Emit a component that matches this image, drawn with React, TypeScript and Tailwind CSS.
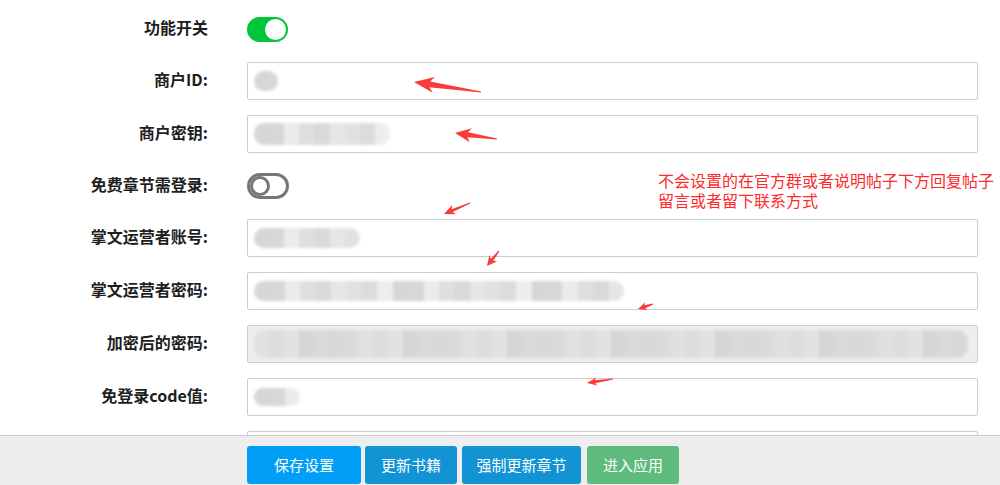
import React from "react";

type Pt = [number, number];

function arrowPoints(tip: Pt, tail: Pt, headLen: number, headW: number, shaftW: number) {
  const dx = tip[0] - tail[0];
  const dy = tip[1] - tail[1];
  const len = Math.hypot(dx, dy);
  const ux = dx / len;
  const uy = dy / len;
  const nx = -uy;
  const ny = ux;
  const at = (d: number, w: number): Pt => [tip[0] - ux * d + nx * w, tip[1] - uy * d + ny * w];
  const pts: Pt[] = [
    tip,
    at(headLen, headW),
    at(headLen * 0.8, shaftW),
    [tail[0] + nx * 0.6, tail[1] + ny * 0.6],
    [tail[0] - nx * 0.6, tail[1] - ny * 0.6],
    at(headLen * 0.8, -shaftW),
    at(headLen, -headW),
  ];
  return pts.map((p) => p.join(",")).join(" ");
}

const ARROWS: { tip: Pt; tail: Pt; h: number; w: number; s: number }[] = [
  { tip: [414, 82], tail: [481, 92], h: 20, w: 8, s: 3 },
  { tip: [455, 133], tail: [497, 139], h: 16, w: 7, s: 2.5 },
  { tip: [444, 214], tail: [470, 203], h: 11, w: 5, s: 1.5 },
  { tip: [487, 266], tail: [499, 251], h: 10, w: 5, s: 1.5 },
  { tip: [638, 309], tail: [653, 304], h: 9, w: 4, s: 1.5 },
  { tip: [587, 383], tail: [613, 379], h: 10, w: 4, s: 1.5 },
];

const GREYS = ["#e6e6e6", "#dcdcdc", "#d6d6d6", "#ebebeb", "#d9d9d9", "#e1e1e1", "#eeeeee", "#d7d7d7", "#dfdfdf"];
const SOFT = ["#dddddd", "#d9d9d9", "#e0e0e0", "#d6d6d6", "#dbdbdb", "#e2e2e2", "#d8d8d8"];

function Blurred({ width, height, cells, soft }: { width: number; height: number; cells: number; soft?: boolean }) {
  const pal = soft ? SOFT : GREYS;
  return (
    <div className="flex overflow-hidden rounded-[10px] blur-[1.5px]" style={{ width, height }}>
      {Array.from({ length: cells }).map((_, i) => (
        <div key={i} className="flex-1" style={{ background: pal[(i * 5 + 2) % pal.length] }} />
      ))}
    </div>
  );
}

function Label({ children }: { children: React.ReactNode }) {
  return (
    <div className="-mt-[4px] w-[208px] shrink-0 text-right text-[16px] font-bold text-[#1e1e1e]">
      {children}
    </div>
  );
}

function InputRow({
  label,
  disabled,
  value,
}: {
  label: string;
  disabled?: boolean;
  value?: { w: number; h: number; cells: number; soft?: boolean };
}) {
  return (
    <div className="flex h-[38px] shrink-0 items-center">
      <Label>{label}</Label>
      <div
        className={`ml-[39px] flex h-[38px] w-[731px] items-center rounded-[2px] border border-[#cccccc] px-[6px] ${
          disabled ? "bg-[#eeeeee]" : "bg-white"
        }`}
      >
        {value && <Blurred width={value.w} height={value.h} cells={value.cells} soft={value.soft} />}
      </div>
    </div>
  );
}

function Toggle({ on }: { on: boolean }) {
  return on ? (
    <div className="flex h-[25px] w-[41px] items-center justify-end rounded-full bg-[#00c63c] pr-[2px]">
      <div className="h-[21px] w-[21px] rounded-full bg-white" />
    </div>
  ) : (
    <div className="flex h-[26px] w-[42px] items-center rounded-full border-[3px] border-[#777777] bg-white">
      <div className="h-[20px] w-[20px] rounded-full border-[3px] border-[#777777] bg-white" />
    </div>
  );
}

function ToggleRow({ label, on }: { label: string; on: boolean }) {
  return (
    <div className="flex h-[36px] shrink-0 items-center">
      <Label>{label}</Label>
      <div className="ml-[39px]">
        <Toggle on={on} />
      </div>
    </div>
  );
}

export default function App() {
  return (
    <div
      className="relative flex h-[485px] w-[1000px] flex-col overflow-hidden bg-white"
      style={{ fontFamily: '"Noto Sans CJK SC", "Noto Sans", sans-serif' }}
    >
      <div className="flex min-h-0 flex-1 flex-col gap-[15px] overflow-hidden pt-[11px]">
        <ToggleRow label="功能开关" on />
        <InputRow label="商户ID:" value={{ w: 24, h: 20, cells: 2 }} />
        <InputRow label="商户密钥:" value={{ w: 136, h: 22, cells: 9 }} />
        <ToggleRow label="免费章节需登录:" on={false} />
        <InputRow label="掌文运营者账号:" value={{ w: 106, h: 20, cells: 7 }} />
        <InputRow label="掌文运营者密码:" value={{ w: 370, h: 20, cells: 24 }} />
        <InputRow label="加密后的密码:" disabled value={{ w: 714, h: 28, cells: 48, soft: true }} />
        <InputRow label="免登录code值:" value={{ w: 46, h: 18, cells: 3 }} />
        <InputRow label="" />
      </div>

      <div className="flex h-[50px] shrink-0 items-end gap-[4px] border-t border-[#cccccc] bg-[#eeeeee] pb-[1px] pl-[247px]">
        <button className="h-[38px] w-[114px] rounded-[3px] bg-[#009ff5] text-[15px] text-white">保存设置</button>
        <button className="h-[38px] w-[92px] rounded-[3px] bg-[#1193d4] text-[15px] text-white">更新书籍</button>
        <button className="ml-[1px] h-[38px] w-[119px] rounded-[3px] bg-[#1193d4] text-[15px] text-white">强制更新章节</button>
        <button className="ml-[2px] h-[38px] w-[92px] rounded-[3px] bg-[#5fba7d] text-[15px] text-white">进入应用</button>
      </div>

      <p className="pointer-events-none absolute left-[658px] top-[170px] text-[16px] leading-[20px] text-[#ff2a2a]">
        不会设置的在官方群或者说明帖子下方回复帖子
        <br />
        留言或者留下联系方式
      </p>

      <svg className="pointer-events-none absolute left-0 top-0" width="1000" height="485">
        {ARROWS.map((a, i) => (
          <polygon key={i} points={arrowPoints(a.tip, a.tail, a.h, a.w, a.s)} fill="#fb3a3a" />
        ))}
      </svg>
    </div>
  );
}
